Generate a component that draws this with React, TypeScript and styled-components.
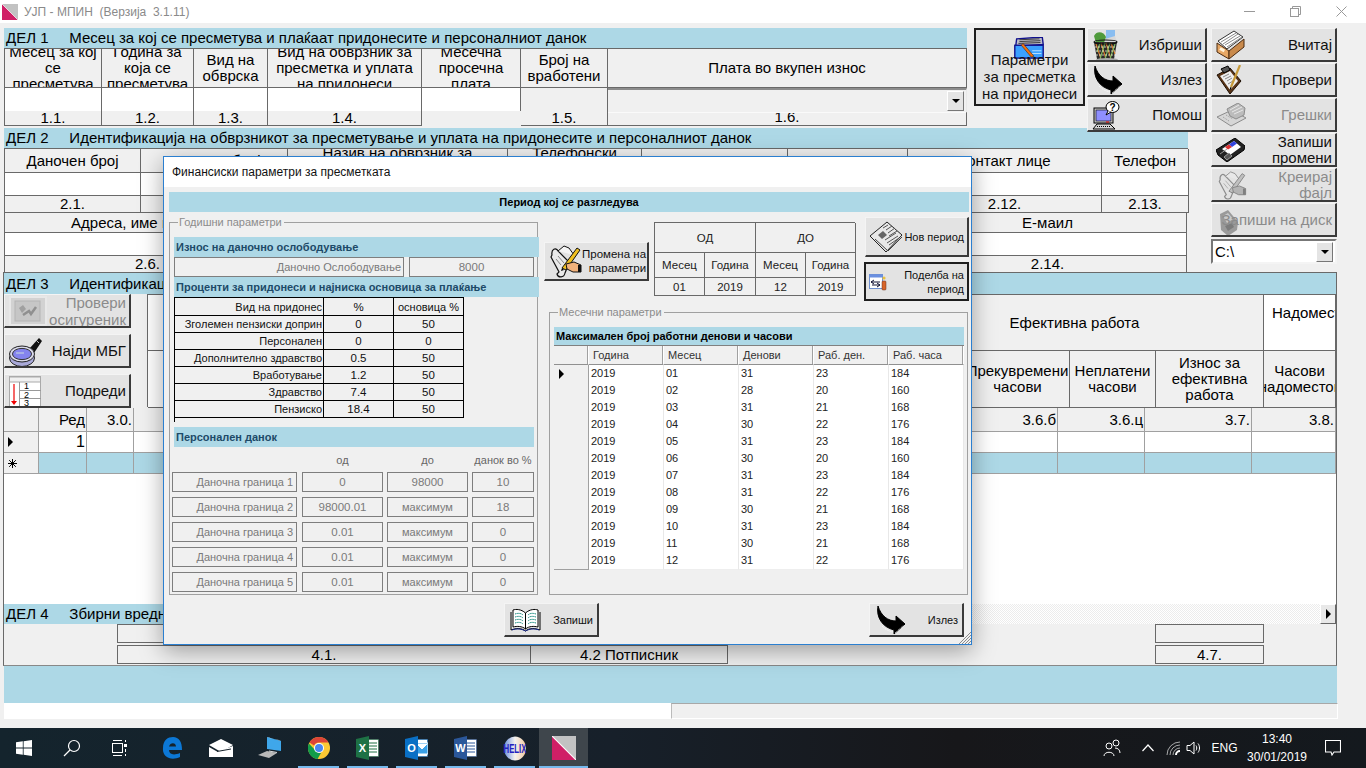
import React from "react";
import styled, { createGlobalStyle } from "styled-components";

const Global = createGlobalStyle`
  * { box-sizing: border-box; }
  html, body { margin: 0; padding: 0; background: #f0f0f0; overflow: hidden; }
  body { font-family: "Liberation Sans", Arial, sans-serif; color: #000; }
`;

const LINE = "#696969";
const BLUE = "#add8e6";

const Page = styled.div`position: relative; width: 1366px; height: 768px; display: flex; flex-direction: column; overflow: hidden;`;

/* ---------- title bar ---------- */
const TitleBar = styled.div`height: 23px; background: #fff; display: flex; align-items: center; padding: 0 2px 0 2px;`;
const TitleText = styled.span`font-size: 12px; color: #8a8a8a; margin-left: 6px; white-space: pre; flex: 1;`;
const WinBtn = styled.div`width: 46px; height: 23px; display: flex; align-items: center; justify-content: center;`;

/* ---------- form layout ---------- */
const Form = styled.div`height: 705px; padding: 5px 0 0 4px; display: flex; flex-direction: column;`;
const TopGrid = styled.div`display: grid; grid-template-columns: 970px 113px 124px 126px; grid-template-rows: 100px 145px;`;
const Del1Area = styled.div`grid-column: 1; grid-row: 1; width: 963px;`;
const Del2Area = styled.div`grid-column: 1 / 4; grid-row: 2; width: 1184px;`;
const ParamArea = styled.div`grid-column: 2; grid-row: 1;`;
const MidStack = styled.div`grid-column: 3; grid-row: 1; display: flex; flex-direction: column; gap: 1px; width: 120px; position: relative; z-index: 2; height: 104px;`;
const RightStack = styled.div`grid-column: 4; grid-row: 1 / 3; display: flex; flex-direction: column; gap: 1px;`;

const Bar = styled.div<{ $h?: number }>`
  height: ${p => p.$h ?? 20}px; background: ${BLUE}; font-size: 15px; line-height: ${p => p.$h ?? 20}px; padding-left: 2px; white-space: pre; overflow: hidden; flex: none;
`;

const Table = styled.div`border-top: 1px solid ${LINE}; border-left: 1px solid ${LINE};`;
const Row = styled.div<{ $cols: string; $h: number }>`display: grid; grid-template-columns: ${p => p.$cols}; height: ${p => p.$h}px;`;
const Cell = styled.div<{ $bg?: string; $noEdge?: boolean; $fs?: number }>`
  display: flex; align-items: center; justify-content: center; text-align: center; overflow: hidden; min-width: 0;
  font-size: ${p => p.$fs ?? 15}px; line-height: 16px;
  background: ${p => p.$bg ?? "#f0f0f0"};
  border-right: 1px solid ${p => (p.$noEdge ? "transparent" : LINE)};
  border-bottom: 1px solid ${p => (p.$noEdge ? "transparent" : LINE)};
`;
const NumCell = styled(Cell)`font-size: 15px;`;
const ClippedCell = styled(Cell)`align-items: flex-end; border-top: 2px solid #fafafa; line-height: 17px; font-size: 15px;`;
const ComboCell = styled.div`background: #f0f0f0; border-top: 2px solid #8c8c8c; border-right: 1px solid #e8e8e8; height: 24px; position: relative; padding: 1px 2px 1px 0; display: flex; justify-content: flex-end;`;
const ComboBtn = styled.div`width: 17px; height: 20px; background: #e4e4e4; border: 1px solid; border-color: #fff #777 #777 #fff; display: flex; align-items: center; justify-content: center;`;
const Caret = styled.div`width: 0; height: 0; border-left: 4px solid transparent; border-right: 4px solid transparent; border-top: 4px solid #000;`;
const CaretRight = styled.div`width: 0; height: 0; border-top: 5px solid transparent; border-bottom: 5px solid transparent; border-left: 5px solid #000;`;

/* ---------- buttons ---------- */
const Btn = styled.div<{ $h?: number; $dis?: boolean; $def?: boolean; $pad?: number }>`
  position: relative; flex: none; display: flex; align-items: center; justify-content: space-between; overflow: hidden;
  height: ${p => p.$h ?? 34}px; background: #e3e3e3; color: ${p => (p.$dis ? "#8b8b8b" : "#111")};
  font-size: 15px; line-height: 16px; text-align: right; padding: 1px ${p => p.$pad ?? 3}px 0 4px;
  border-style: solid;
  border-width: ${p => (p.$def ? "2px" : "1px 2px 2px 1px")};
  border-color: ${p => (p.$def ? "#1e1e1e" : "#f4f4f4 #3a3a3a #3a3a3a #f4f4f4")};
  & > svg { flex: none; }
`;
const BtnText = styled.span`position: relative; z-index: 1; white-space: nowrap;`;
const ParamBtn = styled(Btn)`justify-content: center; text-align: center; width: 111px; height: 78px; align-items: flex-end; padding: 0 0 2px 0; line-height: 17px;`;
const CheckBtn = styled(Btn)`line-height: 17px;`;
const OverIcon = styled.div<{ $l: number; $t: number }>`position: absolute; left: ${p => p.$l}px; top: ${p => p.$t}px; line-height: 0;`;
const DriveCombo = styled.div`height: 25px; margin-top: 1px; width: 126px; background: #fff; border: 2px solid; border-color: #777 #f4f4f4 #f4f4f4 #777; display: flex; align-items: center; justify-content: space-between; font-size: 15px; padding: 0 2px;`;

/* ---------- part 3 ---------- */
const Panel = styled.div`margin: -1px 0 0 -1px; width: 1334px; height: 394px; border: 1px solid ${LINE}; border-bottom-color: #888; display: flex; flex-direction: column; background: #f0f0f0; overflow: hidden; flex: none;`;
const Head3 = styled.div`display: flex; height: 114px; flex: none;`;
const SideBtns = styled.div`width: 127px; flex: none; display: flex; flex-direction: column; gap: 6px;`;
const Head3Table = styled.div`margin-left: 16px; width: 1190px; border-top: 1px solid ${LINE}; border-left: 1px solid ${LINE}; flex: none; height: 113px;`;
const LeftTopCell = styled(Cell)`justify-content: flex-start; align-items: flex-start; padding: 10px 8px; overflow: hidden; white-space: nowrap;`;
const DataGrid = styled.div`height: 66px; flex: none;`;
const GCell = styled.div<{ $bg?: string; $right?: boolean; $fs?: number }>`
  background: ${p => p.$bg ?? "#fff"}; border-right: 1px solid #a0a0a0; border-bottom: 1px solid #a0a0a0; display: flex; align-items: center;
  justify-content: ${p => (p.$right ? "flex-end" : "flex-start")}; padding: 0 1px 0 4px; font-size: ${p => p.$fs ?? 15}px; overflow: hidden; white-space: nowrap;
`;
const Blank = styled.div`height: 130px; background: #fff; flex: none;`;
const Del4Row = styled.div`display: flex; height: 20px; flex: none;`;
const Del4Bar = styled(Bar)`width: 500px;`;
const ScrollTrack = styled.div`flex: 1; background: repeating-conic-gradient(#fff 0 25%, #ececec 0 50%) 0 0 / 2px 2px;`;
const ScrollBtn = styled.div`width: 16px; height: 20px; background: #e8e8e8; border: 1px solid; border-color: #fff #666 #666 #fff; display: flex; align-items: center; justify-content: center;`;
const Del4Grid = styled.div`display: grid; grid-template-columns: 114px 413px 197px 428px 108px 1fr; grid-template-rows: 19px 19px; row-gap: 2px; flex: none; padding-bottom: 2px;`;
const D4Cell = styled.div<{ $col: number; $row: number }>`
  grid-column: ${p => p.$col}; grid-row: ${p => p.$row}; border: 1px solid ${LINE}; margin-left: -1px; background: #f0f0f0;
  display: flex; align-items: center; justify-content: center; font-size: 15px; overflow: hidden;
`;
const BlueFoot = styled.div`width: 1333px; height: 37px; background: ${BLUE}; flex: none;`;
const WhiteFoot = styled.div`width: 1334px; height: 16px; display: flex; flex: none;`;
const WhiteLeft = styled.div`width: 667px; background: #fff;`;
const GreyRight = styled.div`flex: 1; background: #f0f0f0; border: 1px solid; border-color: #a8a8a8 #fff #fff #bbb;`;

/* ---------- taskbar ---------- */
const Taskbar = styled.div`height: 40px; flex: none; background: linear-gradient(90deg, #14242d, #17202a 45%, #17171a 70%, #14191e); display: flex; align-items: center; color: #fff;`;
const TaskBtn = styled.div<{ $w?: number; $on?: boolean; $sel?: boolean }>`
  position: relative; width: ${p => p.$w ?? 49}px; height: 40px; flex: none; display: flex; align-items: center; justify-content: center;
  background: ${p => (p.$sel ? "#3f464c" : "transparent")};
  ${p => p.$on ? `&::after { content: ""; position: absolute; left: ${p.$sel ? 0 : 4}px; right: ${p.$sel ? 0 : 4}px; bottom: 0; height: 2px; background: #76b9ed; }` : ""}
`;
const TaskGap = styled.div`width: 3px; flex: none;`;
const Tray = styled.div`margin-left: auto; padding-right: 10px; display: flex; align-items: center; height: 40px;`;
const TraySlot = styled.div<{ $w: number }>`width: ${p => p.$w}px; display: flex; justify-content: center; align-items: center;`;
const Eng = styled.span`font-size: 12px; color: #fff;`;
const Clock = styled.div`font-size: 12px; line-height: 18px; text-align: center; color: #fff; width: 66px;`;

/* ---------- modal ---------- */
const Modal = styled.div`
  position: absolute; left: 163px; top: 156px; width: 809px; height: 489px; background: #f0f0f0; border: 1px solid #2b7fd0;
  box-shadow: 0 6px 22px rgba(0,0,0,.35); z-index: 5; display: flex; flex-direction: column;
`;
const ModalTitle = styled.div`height: 30px; background: #fff; font-size: 12px; padding: 4px 0 0 8px; line-height: 22px; flex: none; color: #111;`;
const ModalBody = styled.div`flex: 1; padding: 5px 0 0 5px; display: flex; flex-direction: column;`;
const TitleStrip = styled.div`width: 800px; height: 20px; background: ${BLUE}; font: bold 11px/20px "Liberation Sans", sans-serif; text-align: center; flex: none;`;
const Columns = styled.div`display: flex; flex: none; height: 383px;`;
const LeftGroup = styled.div`position: relative; margin-top: 10px; width: 369px; height: 373px; border: 1px solid #a0a0a0; padding: 14px 0 0 4px;`;
const Legend = styled.span`position: absolute; top: -7px; left: 8px; background: #f0f0f0; padding: 0 2px 0 1px; font-size: 11px; line-height: 13px; color: #8c8c8c;`;
const SubBar = styled.div<{ $w: number; $dark?: boolean }>`
  width: ${p => p.$w}px; height: 20px; flex: none; background: ${BLUE}; font: bold 11px/20px "Liberation Sans", sans-serif; padding-left: 2px;
  color: ${p => (p.$dark ? "#000" : "#1d4a68")}; white-space: nowrap; overflow: hidden;
`;
const FieldRow = styled.div`display: flex; gap: 5px; height: 20px;`;
const Field = styled.div<{ $w: number; $right?: boolean; $fs?: number }>`
  width: ${p => p.$w}px; height: 20px; border: 1px solid #7e7e7e; background: #f0f0f0; color: #7a7a7a; font-size: ${p => p.$fs ?? 11.5}px;
  display: flex; align-items: center; justify-content: ${p => (p.$right ? "flex-end" : "center")}; padding: 0 2px; white-space: nowrap; overflow: hidden; flex: none;
`;
const PctRow = styled.div<{ $h: number }>`display: grid; grid-template-columns: 149px 70px 70px; height: ${p => p.$h}px; width: 289px;`;
const PctCell = styled.div<{ $right?: boolean; $fs?: number }>`
  border: 1px solid #000; margin: 0 -1px -1px 0; display: flex; align-items: center; justify-content: ${p => (p.$right ? "flex-end" : "center")}; font-size: ${p => p.$fs ?? 11.5}px; padding: 0 1px; white-space: nowrap; overflow: hidden; color: #111; background: #f0f0f0;
`;
const Stub = styled.div`width: 1px; height: 5px; background: #000; margin-bottom: 5px;`;
const TaxHead = styled.div`display: grid; grid-template-columns: 130px 81px 4px 81px 4px 62px; height: 25px; margin-left: -2px; font-size: 11px; color: #666; align-items: center; text-align: center;`;
const TaxGrid = styled.div`display: flex; flex-direction: column; gap: 5px; margin-left: -2px;`;
const TaxRow = styled.div`display: flex; gap: 4px;`;
const TaxLabel = styled(Field)`margin-right: 1px; padding-right: 3px;`;
const RightCol = styled.div`margin-left: 6px; width: 425px; display: flex; flex-direction: column; padding-top: 5px;`;
const PeriodRow = styled.div`display: flex; height: 84px; flex: none;`;
const ChangeBtn = styled(Btn)`margin-top: 25px; width: 105px; height: 39px; font-size: 11.5px; line-height: 14px; padding: 0 4px 0 4px;`;
const Period = styled.div`margin: 5px 10px 0 5px; width: 201px; height: 74px; border-top: 1px solid ${LINE}; border-left: 1px solid ${LINE}; flex: none;`;
const PCell = styled(Cell)`font-size: 11.5px; background: #f0f0f0; color: #222;`;
const PeriodBtns = styled.div`display: flex; flex-direction: column; gap: 5px; width: 104px; flex: none;`;
const SmallBtn = styled(Btn)`height: 40px; font-size: 11px; line-height: 14px; padding: 0 3px 0 3px;`;
const SmallDefBtn = styled(SmallBtn)`height: 39px; margin-left: -1px; width: 105px;`;
const RightGroup = styled.div`position: relative; margin: 11px 0 0 5px; width: 419px; height: 283px; border: 1px solid #a0a0a0; padding: 14px 0 0 4px;`;
const MonthBar = styled(SubBar)`height: 19px; width: 410px; line-height: 19px; border-bottom: 1px solid #808080;`;
const MCols = "35px 75px 75px 75px 75px 75px";
const MHeadCell = styled.div`background: #f0f0f0; border-right: 1px solid #fff; box-shadow: inset -1px 0 0 #a0a0a0; border-bottom: 1px solid #909090; font-size: 11px; line-height: 18px; padding-left: 4px; color: #333;`;
const MSel = styled.div`background: #f0f0f0; border-bottom: 1px solid #a0a0a0; border-right: 1px solid #a0a0a0; display: flex; align-items: center; padding-left: 5px;`;
const MCell = styled.div`background: #fff; border-bottom: 1px solid #eee; border-right: 1px solid #e8e8e8; font-size: 11px; line-height: 17px; padding-left: 2px; color: #222;`;
const BottomBtns = styled.div`display: flex; margin: 8px 0 0 335px; gap: 270px;`;
const ModalBottomBtn = styled(Btn)`width: 95px; height: 34px; font-size: 11px; padding: 0 4px 0 5px;`;
const Grip = styled.div`position: absolute; right: 0; bottom: 0; line-height: 0;`;

/* ---------- icons ---------- */
const TitleIcon = ({ s = 16 }: { s?: number }) => (
  <svg width={s} height={s} viewBox="0 0 16 16"><rect width="16" height="16" fill="#c2c2c2" /><path d="M0 0 L16 16 H0 Z" fill="#d01f66" /><path d="M0 0 L16 16" stroke="#fff" strokeWidth=".7" /></svg>
);
const CurveArrow = () => (
  <svg width="31" height="30" viewBox="0 0 31 30">
    <path d="M3 1 C1 12 7 22 19 25 L19 29 L30 19 L21 11 L21 16 C13 16 6 11 3 1 Z" fill="#000" stroke="#000" />
    <path d="M7 21 C11 25 14 26 18 27 M20 28 L29 20" fill="none" stroke="#fff" strokeWidth=".8" strokeDasharray="1 1" />
  </svg>
);
const TrashIcon = () => (
  <svg width="28" height="31" viewBox="0 0 28 31">
    <path d="M14 0 h9 v12 h-9 Z" fill="#89bdf0" /><path d="M2 6 C5 0 12 2 14 7 L12 13 H4 Z" fill="#4f9a3c" /><path d="M13 9 l10 -3 2 6 h-12Z" fill="#d8d8d8" />
    <path d="M2 12 H25 L22 29 H5 Z" fill="#2a2a2a" />
    <path d="M4 14 L9 29 M9 13 L14 29 M14 13 L19 29 M19 13 L23 24" stroke="#e08030" strokeWidth="1.1" />
    <path d="M23 14 L18 29 M18 13 L13 29 M13 13 L8 29 M8 13 L5 22" stroke="#7fbf60" strokeWidth="1.1" />
    <path d="M3 17 H24 M4 21 H23 M4 25 H23" stroke="#e8e8d0" strokeWidth=".8" strokeDasharray="2 1" /><ellipse cx="13.5" cy="12" rx="11.5" ry="2" fill="none" stroke="#111" strokeWidth="1.2" />
    <ellipse cx="15" cy="29.5" rx="11" ry="1.4" fill="#aaa" />
  </svg>
);
const HelpPc = () => (
  <svg width="28" height="29" viewBox="0 0 28 29">
    <rect x="2" y="7" width="19" height="15" fill="#c8c8c8" stroke="#000" /><rect x="4" y="9" width="15" height="11" fill="#8f8fff" stroke="#000" strokeWidth=".6" />
    <path d="M1 28 L5 23 H18 L23 28 Z" fill="#d8d8d8" stroke="#000" /><path d="M5 25.5 H19" stroke="#000" strokeDasharray="1 1" /><path d="M14 21 h3" stroke="#e00" />
    <ellipse cx="20.5" cy="6" rx="6.5" ry="5.5" fill="#fff" stroke="#000" /><path d="M16 10 L14 14 L19 11" fill="#fff" stroke="#000" />
    <text x="20.5" y="10" fontSize="10" fontWeight="bold" textAnchor="middle" fontFamily="Liberation Sans">?</text>
  </svg>
);
const BoxIcon = () => (
  <svg width="29" height="30" viewBox="0 0 29 30">
    <path d="M2 11 L18 1 L27 7 L11 19 Z" fill="#fff" stroke="#333" /><path d="M5 12 L20 3 M7 14 L22 4 M9 15 L24 6 M11 17 L26 7" stroke="#888" />
    <path d="M1 13 L13 21 V29 L1 22 Z" fill="#e7a866" stroke="#4a2a10" /><path d="M13 21 L28 9 V17 L13 29 Z" fill="#c98a4c" stroke="#4a2a10" /><rect x="4" y="18" width="5" height="3" fill="#fff2d8" transform="rotate(30 6 19)" />
  </svg>
);
const ClipIcon = () => (
  <svg width="26" height="30" viewBox="0 0 26 30">
    <path d="M1 10 L14 3 L25 16 L14 29 Z" fill="#5a3416" stroke="#1c0f05" /><path d="M4 11 L14 6 L22 16 L14 25 Z" fill="#eee" />
    <path d="M7 12 l6 -3 M9 14 l6 -3 M11 16 l5 -3 M12 19 l5 -3" stroke="#888" /><path d="M5 4 L12 1 L14 5 L8 8 Z" fill="#555" stroke="#000" />
    <path d="M24 0 L15 22" stroke="#c79a3a" strokeWidth="2.2" /><path d="M15 22 l-1 3" stroke="#000" />
  </svg>
);
const FaxIcon = () => (
  <svg width="31" height="24" viewBox="0 0 31 24">
    <path d="M1 14 L16 7 L30 15 L15 23 Z" fill="#d6d6d6" stroke="#8c8c8c" /><path d="M7 14 l6 4 M10 12 l7 4 M13 11 l7 4" stroke="#999" strokeDasharray="1 1" />
    <path d="M11 6 L22 0 L29 5 L28 12 L20 16 L14 13 Z" fill="#bcbcbc" stroke="#8c8c8c" /><path d="M14 7 L23 2 M16 9 L26 4 M18 11 L27 7" stroke="#e8e8e8" />
  </svg>
);
const FloppyIcon = () => (
  <svg width="29" height="24" viewBox="0 0 29 24">
    <path d="M0 12 L19 0 L29 8 L28 12 L11 24 L2 17 Z" fill="#222" stroke="#000" /><path d="M6 11 L18 3 L25 9 L14 17 Z" fill="#fff" /><path d="M13 6.5 L18 3 L21 5.5 L16 9 Z" fill="#3344dd" /><path d="M9 9 L13 6.5 L16 9 L12 11.5Z" fill="#d33" />
    <path d="M4 16 L11 11 M8 19 L13 15 L16 18 L11 22 Z" stroke="#999" fill="#555" />
  </svg>
);
const ScrollPenGrey = () => (
  <svg width="32" height="29" viewBox="0 0 33 33">
    <path d="M3 10 C2 4 7 2 9 6 L23 20 C19 21 17 25 16 28 C15 33 9 33 8 29 L10 27 L2 12 Z" fill="#e2e2e2" stroke="#8c8c8c" strokeWidth="1.3" />
    <path d="M9 6 L15 1 L20 3 L25 10" fill="#e8e8e8" stroke="#8c8c8c" /><path d="M7 14 l5 6 M9 11 l6 7" stroke="#aaa" />
    <path d="M13 23 L28 3 L31 5 L17 25 Z" fill="#c0c0c0" stroke="#808080" /><path d="M17 19 L25 17 L32 20 V27 H24 L18 24 Z" fill="#b4b4b4" stroke="#808080" /><rect x="29" y="20" width="3" height="7" fill="#808080" />
  </svg>
);
const ScrollPen = () => (
  <svg width="33" height="33" viewBox="0 0 33 33">
    <path d="M3 10 C2 4 7 2 9 6 L23 20 C19 21 17 25 16 28 C15 33 9 33 8 29 L10 27 L2 12 Z" fill="#e9e9e9" stroke="#111" strokeWidth="1.2" />
    <path d="M9 6 L15 1 L20 3 L25 10" fill="#f4f4f4" stroke="#111" /><path d="M7 14 l5 6 M9 11 l6 7" stroke="#888" />
    <path d="M13 23 L28 3 L31 5 L17 25 Z" fill="#f0c020" stroke="#111" /><path d="M13 23 l-1 3 3 -1" fill="#000" /><path d="M17 19 L25 17 L32 20 V27 H24 L18 24 Z" fill="#f1b27c" stroke="#111" /><rect x="29" y="20" width="3" height="7" fill="#111" />
  </svg>
);
const DiskGrey = () => (
  <svg width="18" height="26" viewBox="0 0 18 26">
    <path d="M0 4 L8 0 L18 12 L17 20 L8 26 L1 20 Z" fill="#9a9a9a" /><path d="M3 6 L8 3 L13 9 L7 13 Z" fill="#c9c9c9" /><path d="M5 16 L12 13 L14 17 L8 21 Z" fill="#7c7c7c" />
  </svg>
);
const CheckGrey = () => (
  <svg width="38" height="30" viewBox="0 0 38 30">
    <rect x="1" y="1" width="36" height="28" fill="#d2d2d2" stroke="#e8e8e8" strokeWidth="2" /><rect x="6" y="5" width="25" height="20" fill="#c6c6c6" stroke="#b4b4b4" />
    <path d="M10 12 L14 9 L17 13 L13 17 Z" fill="#a0a0a0" /><path d="M14 19 L20 15 L22 18 L27 11" fill="none" stroke="#909090" strokeWidth="2.5" />
  </svg>
);
const Magnifier = () => (
  <svg width="34" height="31" viewBox="0 0 34 31">
    <path d="M20 13 L30 2 L33 5 L25 17 Z" fill="#111" /><path d="M27 4 l3 3" stroke="#bbb" />
    <ellipse cx="13" cy="22" rx="12.5" ry="8.5" fill="#a9a9d8" stroke="#222" /><ellipse cx="13" cy="18" rx="12.5" ry="8" fill="#d9d9e8" stroke="#222" /><ellipse cx="13" cy="18" rx="9.5" ry="5.6" fill="#8484ee" stroke="#333" /><path d="M7 17 h8" stroke="#cdd" />
  </svg>
);
const SortIcon = () => (
  <svg width="32" height="31" viewBox="0 0 32 31">
    <rect x=".5" y=".5" width="31" height="30" fill="#fff" stroke="#aaa" /><rect x=".5" y="1" width="31" height="5" fill="#f0f0f0" stroke="#aaa" />
    <path d="M10.5 6 V31 M10.5 14.5 H32 M10.5 22.5 H32" stroke="#999" /><path d="M5 8 V26" stroke="#e00" strokeWidth="1.2" /><path d="M2 25 H8 L5 29 Z" fill="#e00" />
    <text x="15" y="13" fontSize="9" fontFamily="Liberation Sans">1</text><text x="15" y="21.5" fontSize="9" fontFamily="Liberation Sans">2</text><text x="15" y="30" fontSize="9" fontFamily="Liberation Sans">3</text>
  </svg>
);
const ParamIcon = () => (
  <svg width="32" height="22" viewBox="0 0 33 24">
    <path d="M3 2 L31 0 L32 8 L2 10 Z" fill="#b9b9c8" stroke="#10108c" strokeWidth="1.5" /><path d="M6 3 L28 2 M6 5 L29 4 M5 7 L29 6" stroke="#333" /><rect x="1" y="9" width="31" height="14" fill="#3aa0ff" stroke="#10108c" strokeWidth="1.5" />
    <path d="M10 7 L22 21 L19 22 L8 9 Z" fill="#f07010" stroke="#201000" strokeWidth=".5" /><path d="M20 15 H30 M20 18 H30" stroke="#bfe3ff" />
  </svg>
);
const NewsIcon = () => (
  <svg width="34" height="32" viewBox="0 0 34 32">
    <path d="M1 15 L18 1 L33 14 L17 31 Z" fill="#e8e8e8" stroke="#222" /><path d="M6 18 L19 30 L33 16" fill="none" stroke="#444" /><path d="M9 14 L14 10 L18 14 L13 18 Z" fill="#666" />
    <path d="M14 7 L19 4 M17 9 L23 5 M19 12 L26 7 M20 15 L28 10 M16 19 L27 12 M18 22 L29 15 M20 24 L30 17" stroke="#555" />
  </svg>
);
const SplitIcon = () => (
  <svg width="18" height="18" viewBox="0 0 18 18">
    <rect x=".5" y="1.5" width="13" height="14" fill="#fff" stroke="#6f8fd0" /><rect x=".5" y="1.5" width="13" height="3" fill="#6a8fe0" /><path d="M2 9 H11 M2 9 l3 -2 M2 9 l3 2 M11 12 H3 M11 12 l-3 -2 M11 12 l-3 2" stroke="#113" fill="none" />
    <rect x="13" y="8" width="4" height="9" rx="1" fill="#d8652a" stroke="#632" strokeWidth=".5" /><circle cx="15" cy="5" r="1.6" fill="#e8c040" />
  </svg>
);
const BookIcon = () => (
  <svg width="31" height="24" viewBox="0 0 31 24">
    <path d="M15.5 5 C11 1 6 1 3 2 V19 C7 18 12 18 15.5 21 C19 18 24 18 28 19 V2 C25 1 20 1 15.5 5 Z" fill="#fff" stroke="#000" /><path d="M15.5 5 V21" stroke="#000" />
    <path d="M5 6 C8 5 11 5 13 7 M5 9 C8 8 11 8 13 10 M5 12 C8 11 11 11 13 13 M5 15 C8 14 11 14 13 16 M26 6 C23 5 20 5 18 7 M26 9 C23 8 20 8 18 10 M26 12 C23 11 20 11 18 13 M26 15 C23 14 20 14 18 16" stroke="#1a8a80" fill="none" strokeDasharray="1.5 .7" />
    <path d="M1 4 V22 C6 20 12 20 15.5 23 C19 20 25 20 30 22 V4" fill="none" stroke="#000" /><path d="M2 22 C7 20 12 21 15.5 23 C19 21 24 20 29 22" fill="none" stroke="#128" />
  </svg>
);
const StarIcon = () => (
  <svg width="9" height="9" viewBox="0 0 9 9" stroke="#000"><path d="M4.5 0 V9 M0 4.5 H9 M1.2 1.2 L7.8 7.8 M7.8 1.2 L1.2 7.8" /></svg>
);

const WinLogo = () => (<svg width="16" height="16" viewBox="0 0 16 16" fill="#fff"><path d="M0 2.3 L6.8 1.3 V7.6 H0 Z M7.6 1.2 L16 0 V7.6 H7.6 Z M0 8.4 H6.8 V14.7 L0 13.7 Z M7.6 8.4 H16 V16 L7.6 14.8 Z" /></svg>);
const SearchI = () => (<svg width="18" height="18" viewBox="0 0 18 18" fill="none" stroke="#fff" strokeWidth="1.2"><circle cx="11" cy="7" r="5.5" /><path d="M7 11 L1 17" /></svg>);
const TaskView = () => (<svg width="16" height="18" viewBox="0 0 16 18" fill="none" stroke="#fff"><rect x=".5" y="4.5" width="10" height="9" /><path d="M1 1.5 H10 M1 16.5 H10" /><path d="M13.5 1 V3 M13.5 15 V17" /><rect x="12" y="5" width="3" height="3" fill="#fff" stroke="none" /><path d="M13.5 10 V13" /></svg>);
const EdgeI = () => (<svg width="20" height="22" viewBox="0 0 20 22"><path d="M1 11 C1 3 6 0 11 0 C17 0 20 5 20 13 H7 C7 17 11 19 18 16 V20 C10 24 0 21 1 11 Z M7 9.5 H14 C14 5 8 5 7 9.5 Z" fill="#0c78d6" fillRule="evenodd" /></svg>);
const MailI = () => (<svg width="24" height="18" viewBox="0 0 24 18"><path d="M0 6 L12 0 L24 6 L12 13 Z" fill="#fff" /><path d="M0 8 L8 12.5 L24 7 V18 H0 Z" fill="#fff" /><path d="M8 12.5 L22 10" stroke="#15212a" /></svg>);
const PcI = () => (<svg width="24" height="22" viewBox="0 0 24 22"><path d="M9 0 L23 4 V14 L9 12 Z" fill="#3fa7ea" /><path d="M9 0 L23 4 L21 3 L11 1Z" fill="#bde" /><path d="M0 18 L9 14 L19 16 L11 21 Z" fill="#b9b9b9" /><path d="M11 14 l8 1.5" stroke="#ddd" /></svg>);
const ChromeI = () => (
  <svg width="22" height="22" viewBox="0 0 22 22">
    <circle cx="11" cy="11" r="11" fill="#fcc934" /><path d="M11 0 A11 11 0 0 1 20.5 5.5 H11 A5.5 5.5 0 0 0 6 8.5 L1.5 5.5 A11 11 0 0 1 11 0 Z" fill="#dd4437" /><path d="M0.9 6.5 L8 14 L13 16 L9.5 22 A11 11 0 0 1 0.9 6.5Z" fill="#129c4a" />
    <circle cx="11" cy="11" r="5" fill="#fff" /><circle cx="11" cy="11" r="4" fill="#4a87f0" />
  </svg>
);
const OfficeI = ({ bg, letter, kind }: { bg: string; letter: string; kind: "x" | "o" | "w" }) => (
  <svg width="23" height="24" viewBox="0 0 23 24">
    <rect x="11" y="3.5" width="11.5" height="17" fill="#fff" stroke={bg} strokeWidth=".5" />
    {kind === "o" ? <path d="M11 7 H23 V18 H11 Z M12 8 L17 13 L22 8" fill="#3aa0e6" stroke="#fff" /> : <path d="M13 7 H21 M13 10 H21 M13 13 H21 M13 16 H21" stroke={bg} />}
    <path d="M0 3 L13 0 V24 L0 21 Z" fill={bg} />
    <text x="6.5" y="16" fontSize="11" fontWeight="bold" fill="#fff" textAnchor="middle" fontFamily="Liberation Sans">{letter}</text>
  </svg>
);
const HelixI = () => (
  <svg width="24" height="25" viewBox="0 0 24 25">
    <defs><linearGradient id="hx" x1="0" x2="1" y1="0" y2="0"><stop offset="0" stopColor="#6a8fe0" /><stop offset=".5" stopColor="#f5f2ee" /><stop offset="1" stopColor="#f0c8a0" /></linearGradient></defs>
    <ellipse cx="12" cy="12.5" rx="11" ry="12" fill="url(#hx)" /><text x="12" y="16.5" fontSize="12" fontWeight="bold" fill="#2222c0" textAnchor="middle" fontFamily="Liberation Sans" textLength="23" lengthAdjust="spacingAndGlyphs">HELIX</text>
  </svg>
);
const PeopleI = () => (<svg width="18" height="18" viewBox="0 0 18 18" fill="none" stroke="#fff"><circle cx="6" cy="7" r="3" /><path d="M1 17 C1 12 11 12 11 17" /><circle cx="13" cy="4" r="3" /><path d="M12 9 C15 9 17 11 17 14" /></svg>);
const ChevUp = () => (<svg width="12" height="8" viewBox="0 0 12 8" fill="none" stroke="#fff" strokeWidth="1.2"><path d="M0.5 7 L6 1 L11.5 7" /></svg>);
const WifiI = () => (<svg width="16" height="16" viewBox="0 0 16 16" fill="none" stroke="#d8d8d8"><path d="M2 15 A13 13 0 0 1 15 2 M5 15 A10 10 0 0 1 15 5" opacity=".75" /><path d="M8 15 A7 7 0 0 1 15 8" opacity=".75" /><path d="M11 15 A4 4 0 0 1 15 11" strokeWidth="2" stroke="#fff" /></svg>);
const VolI = () => (<svg width="16" height="16" viewBox="0 0 16 16" fill="none" stroke="#fff"><path d="M1 5.5 H4 L8 2 V14 L4 10.5 H1 Z" /><path d="M10 5.5 C11 7 11 9 10 10.5 M12 3.5 C14 6 14 10 12 12.5" /></svg>);
const NotifI = () => (<svg width="16" height="16" viewBox="0 0 16 16" fill="none" stroke="#fff" strokeWidth="1.1"><path d="M.5 .5 H15.5 V12 H9 L7 15 L6 12 H.5 Z" /></svg>);

/* ---------- data ---------- */
const rows: [string, string, string][] = [
  ["Зголемен пензиски доприн", "0", "50"],
  ["Персонален", "0", "0"],
  ["Дополнително здравство", "0.5", "50"],
  ["Вработување", "1.2", "50"],
  ["Здравство", "7.4", "50"],
  ["Пензиско", "18.4", "50"],
];
const taxes = [
  ["Даночна граница 1", "0", "98000", "10"],
  ["Даночна граница 2", "98000.01", "максимум", "18"],
  ["Даночна граница 3", "0.01", "максимум", "0"],
  ["Даночна граница 4", "0.01", "максимум", "0"],
  ["Даночна граница 5", "0.01", "максимум", "0"],
];
const months = [
  ["01", "31", "23", "184"], ["02", "28", "20", "160"], ["03", "31", "21", "168"], ["04", "30", "22", "176"],
  ["05", "31", "23", "184"], ["06", "30", "20", "160"], ["07", "31", "23", "184"], ["08", "31", "22", "176"],
  ["09", "30", "21", "168"], ["10", "31", "23", "184"], ["11", "30", "21", "168"], ["12", "31", "22", "176"],
];
const C1 = "97px 92px 74px 154px 99px 87px 359px";
const C2 = "136px 147px 220px 134px 146px 120px 194px 87px";
const C2B = "286px 618px 278px";
const CH1 = "738px 378px 72px";
const CH2 = "738px 80px 104px 86px 108px 72px";
const CG = "35px 48px 47px 924px 87px 107px 84px";

export default function App() {
  return (
    <Page>
      <Global />
      <TitleBar>
        <TitleIcon />
        <TitleText>УЈП - МПИН  (Верзија  3.1.11)</TitleText>
        <WinBtn><svg width="11" height="11" viewBox="0 0 11 11"><path d="M0 5.5 H11" stroke="#999" /></svg></WinBtn>
        <WinBtn><svg width="11" height="11" viewBox="0 0 11 11" fill="none" stroke="#999"><rect x=".5" y="2.5" width="8" height="8" /><path d="M2.5 2.5 V.5 H10.5 V8.5 H8.5" /></svg></WinBtn>
        <WinBtn><svg width="11" height="11" viewBox="0 0 11 11" stroke="#999"><path d="M.5 .5 L10.5 10.5 M10.5 .5 L.5 10.5" /></svg></WinBtn>
      </TitleBar>

      <Form>
        <TopGrid>
          <Del1Area>
            <Bar>ДЕЛ 1     Месец за кој се пресметува и плаќаат придонесите и персоналниот данок</Bar>
            <Table>
              <Row $cols={C1} $h={39}>
                <Cell>Месец за кој<br />се<br />пресметува</Cell>
                <Cell>Година за<br />која се<br />пресметува</Cell>
                <Cell>Вид на<br />обврска</Cell>
                <Cell>Вид на обврзник за<br />пресметка и уплата<br />на придонеси</Cell>
                <Cell>Месечна<br />просечна<br />плата</Cell>
                <Cell>Број на<br />вработени</Cell>
                <Cell>Плата во вкупен износ</Cell>
              </Row>
              <Row $cols={C1} $h={23}>
                <Cell $bg="#fff" /><Cell $bg="#fff" /><Cell $bg="#fff" /><Cell $bg="#fff" /><Cell $bg="#fff" /><Cell />
                <ComboCell><ComboBtn><Caret /></ComboBtn></ComboCell>
              </Row>
              <Row $cols={C1} $h={15}>
                <NumCell>1.1.</NumCell><NumCell>1.2.</NumCell><NumCell>1.3.</NumCell><NumCell>1.4.</NumCell><Cell $noEdge />
                <NumCell>1.5.</NumCell><ClippedCell>1.6.</ClippedCell>
              </Row>
            </Table>
          </Del1Area>
          <ParamArea>
            <ParamBtn $def>
              <OverIcon $l={37} $t={7}><ParamIcon /></OverIcon>
              <BtnText>Параметри<br />за пресметка<br />на придонеси</BtnText>
            </ParamBtn>
          </ParamArea>
          <MidStack>
            <Btn><TrashIcon /><BtnText>Избриши</BtnText></Btn>
            <Btn><CurveArrow /><BtnText>Излез</BtnText></Btn>
            <Btn><HelpPc /><BtnText>Помош</BtnText></Btn>
          </MidStack>
          <RightStack>
            <Btn><BoxIcon /><BtnText>Вчитај</BtnText></Btn>
            <Btn><ClipIcon /><BtnText>Провери</BtnText></Btn>
            <Btn $dis><FaxIcon /><BtnText>Грешки</BtnText></Btn>
            <Btn><FloppyIcon /><BtnText>Запиши<br />промени</BtnText></Btn>
            <Btn $dis><ScrollPenGrey /><BtnText>Креирај<br />фајл</BtnText></Btn>
            <Btn $dis>
              <OverIcon $l={8} $t={6}><DiskGrey /></OverIcon>
              <span /><BtnText>Запиши на диск</BtnText>
            </Btn>
            <DriveCombo>C:\<ComboBtn><Caret /></ComboBtn></DriveCombo>
          </RightStack>
          <Del2Area>
            <Bar>ДЕЛ 2     Идентификација на обврзникот за пресметување и уплата на придонесите и персоналниот данок</Bar>
            <Table>
              <Row $cols={C2} $h={24}>
                <Cell>Даночен број</Cell><Cell>Матичен број</Cell><Cell>Назив на обврзник за<br />пресметување</Cell><Cell>Телефонски<br />број</Cell>
                <Cell /><Cell /><Cell>Контакт лице</Cell><Cell>Телефон</Cell>
              </Row>
              <Row $cols={C2} $h={23}>
                <Cell $bg="#fff" /><Cell $bg="#fff" /><Cell $bg="#fff" /><Cell $bg="#fff" /><Cell $bg="#fff" /><Cell $bg="#fff" /><Cell $bg="#fff" /><Cell $bg="#fff" />
              </Row>
              <Row $cols={C2} $h={17}>
                <NumCell>2.1.</NumCell><NumCell>2.2.</NumCell><NumCell>2.3.</NumCell><NumCell>2.4.</NumCell><NumCell>2.10.</NumCell><NumCell>2.11.</NumCell><NumCell>2.12.</NumCell><NumCell>2.13.</NumCell>
              </Row>
              <Row $cols={C2B} $h={20}>
                <Cell>Адреса, име на улица</Cell><Cell /><Cell>Е-маил</Cell>
              </Row>
              <Row $cols={C2B} $h={23}>
                <Cell $bg="#fff" /><Cell $bg="#fff" /><Cell $bg="#fff" />
              </Row>
              <Row $cols={C2B} $h={17}>
                <NumCell>2.6.</NumCell><NumCell>2.7.</NumCell><NumCell>2.14.</NumCell>
              </Row>
            </Table>
          </Del2Area>
        </TopGrid>

        <Panel>
          <Bar $h={21}>ДЕЛ 3     Идентификација на осигурениците</Bar>
          <Head3>
            <SideBtns>
              <CheckBtn $dis><CheckGrey /><BtnText>Провери<br />осигуреник</BtnText></CheckBtn>
              <Btn><Magnifier /><BtnText>Најди МБГ</BtnText></Btn>
              <Btn><SortIcon /><BtnText>Подреди</BtnText></Btn>
            </SideBtns>
            <Head3Table>
              <Row $cols={CH1} $h={56}>
                <Cell $bg="#fff" /><Cell>Ефективна работа</Cell><LeftTopCell $bg="#fff">Надомест за боледување</LeftTopCell>
              </Row>
              <Row $cols={CH2} $h={57}>
                <Cell $bg="#fff" /><Cell /><Cell>Прекувремени<br />часови</Cell><Cell>Неплатени<br />часови</Cell><Cell>Износ за<br />ефективна<br />работа</Cell><Cell>Часови<br />надоместок</Cell>
              </Row>
            </Head3Table>
          </Head3>
          <DataGrid>
            <Row $cols={CG} $h={24}>
              <GCell $bg="#f0f0f0" /><GCell $bg="#f0f0f0" $right>Ред</GCell><GCell $bg="#f0f0f0" $right>3.0.</GCell>
              <GCell $bg="#f0f0f0" $right>3.6.б</GCell><GCell $bg="#f0f0f0" $right>3.6.ц</GCell><GCell $bg="#f0f0f0" $right>3.7.</GCell><GCell $bg="#f0f0f0" $right>3.8.</GCell>
            </Row>
            <Row $cols={CG} $h={21}>
              <GCell $bg="#f0f0f0"><CaretRight /></GCell><GCell $right $fs={16}>1</GCell><GCell /><GCell /><GCell /><GCell /><GCell />
            </Row>
            <Row $cols={CG} $h={21}>
              <GCell $bg="#f0f0f0"><StarIcon /></GCell><GCell $bg={BLUE} /><GCell $bg={BLUE} /><GCell $bg={BLUE} /><GCell $bg={BLUE} /><GCell $bg={BLUE} /><GCell $bg={BLUE} />
            </Row>
          </DataGrid>
          <Blank />
          <Del4Row>
            <Del4Bar>ДЕЛ 4     Збирни вредности</Del4Bar>
            <ScrollTrack />
            <ScrollBtn><CaretRight /></ScrollBtn>
          </Del4Row>
          <Del4Grid>
            <D4Cell $col={2} $row={1} /><D4Cell $col={5} $row={1} />
            <D4Cell $col={2} $row={2}>4.1.</D4Cell><D4Cell $col={3} $row={2}>4.2 Потписник</D4Cell><D4Cell $col={5} $row={2}>4.7.</D4Cell>
          </Del4Grid>
        </Panel>
        <BlueFoot />
        <WhiteFoot><WhiteLeft /><GreyRight /></WhiteFoot>
      </Form>

      <Taskbar>
        <TaskBtn $w={48}><WinLogo /></TaskBtn>
        <TaskBtn $w={48}><SearchI /></TaskBtn>
        <TaskBtn $w={48}><TaskView /></TaskBtn>
        <TaskGap />
        <TaskBtn><EdgeI /></TaskBtn>
        <TaskBtn><MailI /></TaskBtn>
        <TaskBtn><PcI /></TaskBtn>
        <TaskBtn $on><ChromeI /></TaskBtn>
        <TaskBtn $on><OfficeI bg="#1e7145" letter="X" kind="x" /></TaskBtn>
        <TaskBtn $on><OfficeI bg="#0a6fc4" letter="O" kind="o" /></TaskBtn>
        <TaskBtn $on><OfficeI bg="#2b579a" letter="W" kind="w" /></TaskBtn>
        <TaskBtn $on><HelixI /></TaskBtn>
        <TaskBtn $on $sel><TitleIcon s={24} /></TaskBtn>
        <Tray>
          <TraySlot $w={42}><PeopleI /></TraySlot>
          <TraySlot $w={30}><ChevUp /></TraySlot>
          <TraySlot $w={20}><WifiI /></TraySlot>
          <TraySlot $w={22}><VolI /></TraySlot>
          <TraySlot $w={39}><Eng>ENG</Eng></TraySlot>
          <Clock>13:40<br />30/01/2019</Clock>
          <TraySlot $w={46}><NotifI /></TraySlot>
        </Tray>
      </Taskbar>

      <Modal>
        <ModalTitle>Финансиски параметри за пресметката</ModalTitle>
        <ModalBody>
          <TitleStrip>Период кој се разгледува</TitleStrip>
          <Columns>
            <LeftGroup>
              <Legend>Годишни параметри</Legend>
              <SubBar $w={365}>Износ на даночно ослободување</SubBar>
              <FieldRow>
                <Field $w={230} $right $fs={11}>Даночно Ослободување</Field>
                <Field $w={125}>8000</Field>
              </FieldRow>
              <SubBar $w={365}>Проценти за придонеси и најниска основица за плаќање</SubBar>
              <PctRow $h={18}>
                <PctCell $right $fs={11}>Вид на придонес</PctCell><PctCell>%</PctCell><PctCell $fs={11}>основица %</PctCell>
              </PctRow>
              {rows.map(r => (
                <PctRow $h={17} key={r[0]}>
                  <PctCell $right $fs={11}>{r[0]}</PctCell><PctCell>{r[1]}</PctCell><PctCell>{r[2]}</PctCell>
                </PctRow>
              ))}
              <Stub />
              <SubBar $w={360}>Персонален данок</SubBar>
              <TaxHead>
                <span /><span>од</span><span /><span>до</span><span /><span>данок во %</span>
              </TaxHead>
              <TaxGrid>
                {taxes.map(t => (
                  <TaxRow key={t[0]}>
                    <TaxLabel $w={125} $right $fs={11}>{t[0]}</TaxLabel>
                    <Field $w={81}>{t[1]}</Field>
                    <Field $w={81} $fs={t[2] === "максимум" ? 11 : 11.5}>{t[2]}</Field>
                    <Field $w={62}>{t[3]}</Field>
                  </TaxRow>
                ))}
              </TaxGrid>
            </LeftGroup>
            <RightCol>
              <PeriodRow>
                <ChangeBtn><ScrollPen /><BtnText>Промена на<br />параметри</BtnText></ChangeBtn>
                <Period>
                  <Row $cols="101px 100px" $h={30}><PCell>ОД</PCell><PCell>ДО</PCell></Row>
                  <Row $cols="50px 51px 50px 50px" $h={25}><PCell>Месец</PCell><PCell>Година</PCell><PCell>Месец</PCell><PCell>Година</PCell></Row>
                  <Row $cols="50px 51px 50px 50px" $h={18}><PCell>01</PCell><PCell>2019</PCell><PCell>12</PCell><PCell>2019</PCell></Row>
                </Period>
                <PeriodBtns>
                  <SmallBtn><NewsIcon /><BtnText>Нов период</BtnText></SmallBtn>
                  <SmallDefBtn $def><SplitIcon /><BtnText>Поделба на<br />период</BtnText></SmallDefBtn>
                </PeriodBtns>
              </PeriodRow>
              <RightGroup>
                <Legend>Месечни параметри</Legend>
                <MonthBar $w={410} $dark>Максимален број работни денови и часови</MonthBar>
                <Row $cols={MCols} $h={19}>
                  <MHeadCell /><MHeadCell>Година</MHeadCell><MHeadCell>Месец</MHeadCell><MHeadCell>Денови</MHeadCell><MHeadCell>Раб. ден.</MHeadCell><MHeadCell>Раб. часа</MHeadCell>
                </Row>
                {months.map((m, i) => (
                  <Row $cols={MCols} $h={17} key={m[0]}>
                    <MSel>{i === 0 && <CaretRight />}</MSel>
                    <MCell>2019</MCell><MCell>{m[0]}</MCell><MCell>{m[1]}</MCell><MCell>{m[2]}</MCell><MCell>{m[3]}</MCell>
                  </Row>
                ))}
              </RightGroup>
            </RightCol>
          </Columns>
          <BottomBtns>
            <ModalBottomBtn><BookIcon /><BtnText>Запиши</BtnText></ModalBottomBtn>
            <ModalBottomBtn><CurveArrow /><BtnText>Излез</BtnText></ModalBottomBtn>
          </BottomBtns>
        </ModalBody>
        <Grip>
          <svg width="13" height="13" viewBox="0 0 13 13" stroke="#8a8a8a"><path d="M13 1 L1 13 M13 4 L4 13 M13 7 L7 13 M13 10 L10 13" /></svg>
        </Grip>
      </Modal>
    </Page>
  );
}
